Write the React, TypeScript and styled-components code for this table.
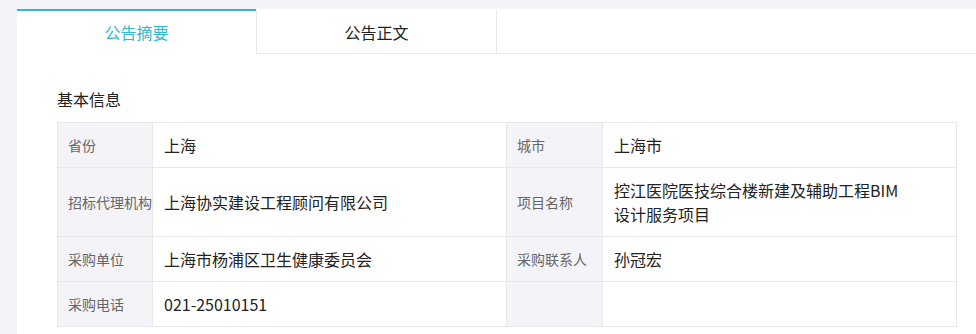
import {FC} from 'react';
import styled, {createGlobalStyle} from 'styled-components';

type Field = {
    label: string
    value: string[]
}

const rows: [Field, Field][] = [
    [{label: '省份', value: ['上海']}, {label: '城市', value: ['上海市']}],
    [
        {label: '招标代理机构', value: ['上海协实建设工程顾问有限公司']},
        {label: '项目名称', value: ['控江医院医技综合楼新建及辅助工程BIM', '设计服务项目']},
    ],
    [{label: '采购单位', value: ['上海市杨浦区卫生健康委员会']}, {label: '采购联系人', value: ['孙冠宏']}],
    [{label: '采购电话', value: ['021-25010151']}, {label: '', value: []}],
];

const tabs = ['公告摘要', '公告正文'];

const App: FC = () => {
    return (
        <>
            <GlobalStyle/>
            <Page>
                <Panel>
                    <TabBar>
                        {tabs.map((t, i) => (
                            <Tab key={t} $active={i === 0}>{t}</Tab>
                        ))}
                        <TabRest/>
                    </TabBar>
                    <Section>
                        <Title>基本信息</Title>
                        <InfoTable>
                            <colgroup>
                                <col style={{width: 95}}/>
                                <col style={{width: 354}}/>
                                <col style={{width: 96}}/>
                                <col style={{width: 354}}/>
                            </colgroup>
                            <tbody>
                            {rows.map((pair, i) => (
                                <tr key={i}>
                                    {pair.map((f, j) => [
                                        <Label key={`l${j}`}>{f.label}</Label>,
                                        <Value key={`v${j}`}>
                                            {f.value.map((line, k) => <div key={k}>{line}</div>)}
                                        </Value>,
                                    ])}
                                </tr>
                            ))}
                            </tbody>
                        </InfoTable>
                    </Section>
                </Panel>
            </Page>
        </>
    )
};

export default App;

const GlobalStyle = createGlobalStyle`
  body {
    margin: 0;
    background: #f4f4f8;
    font-family: "Noto Sans CJK SC", "Microsoft YaHei", sans-serif;
  }
`;

const Page = styled.div`
  padding: 9px 0 0 17px;
  height: 334px;
  box-sizing: border-box;
  overflow: hidden;
`;

const Panel = styled.div`
  background: #fff;
  height: 100%;
`;

const TabBar = styled.div`
  display: flex;
  height: 45px;
`;

const Tab = styled.div<{ $active?: boolean }>`
  width: 239px;
  box-sizing: border-box;
  display: flex;
  align-items: center;
  justify-content: center;
  font-size: 16px;
  color: ${props => props.$active ? '#2fb8d1' : '#222'};
  border-top: 2px solid ${props => props.$active ? '#2fb8d1' : 'transparent'};
  border-bottom: 1px solid ${props => props.$active ? 'transparent' : '#e8e8e8'};
  border-left: ${props => props.$active ? 'none' : '1px solid #e8e8e8'};
  padding-bottom: 1px;

  &:nth-child(2) {
    width: 241px;
    border-right: 1px solid #e8e8e8;
  }
`;

const TabRest = styled.div`
  flex: 1;
  border-bottom: 1px solid #e8e8e8;
`;

const Section = styled.div`
  padding: 34px 20px 0 40px;
`;

const Title = styled.div`
  font-size: 16px;
  line-height: 22px;
  color: #222;
  margin-bottom: 12px;
`;

const InfoTable = styled.table`
  width: 899px;
  table-layout: fixed;
  border-collapse: collapse;
  border: 1px solid #e8e8e8;
`;

const Label = styled.td`
  background: #f4f4f8;
  border: 1px solid #e8e8e8;
  padding: 10px 0 10px 10px;
  font-size: 14px;
  line-height: 24px;
  color: #666;
  white-space: nowrap;
  overflow: hidden;
`;

const Value = styled.td`
  border: 1px solid #e8e8e8;
  padding: 10px 11px;
  font-size: 16px;
  line-height: 24px;
  color: #222;
`;
